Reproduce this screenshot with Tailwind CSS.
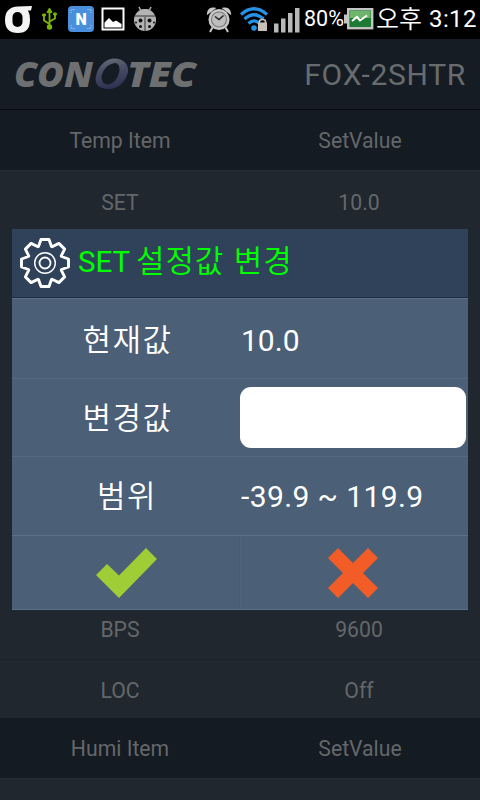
<!DOCTYPE html>
<html lang="ko">
<head>
    <meta charset="UTF-8" />
    <title>FOX-2SHTR</title>
    <script src="https://cdn.jsdelivr.net/npm/@tailwindcss/browser@4"></script>
</head>
<body class="w-[480px] h-[800px] overflow-hidden bg-[#20272f] font-['Roboto','Noto_Sans_CJK_KR',sans-serif]">

<div class="relative w-[480px] h-[800px] overflow-hidden flex flex-col">

    <!-- Status bar -->
    <div class="h-[39px] shrink-0 bg-black flex items-center text-white">
        <svg class="shrink-0" width="304" height="39" viewBox="0 0 304 39">
            <path d="M32 6 L31 10.500 H28 Q30 14 30 20 Q30 33 18 33 Q5 33 5 20 Q5 7 18 6.500 Z" fill="#f4f4f4" />
            <rect x="12.500" y="12" width="10" height="15" rx="5" fill="#000" />

            <g stroke="#7ab800" fill="none" stroke-width="1.800">
                <path d="M49.500 11 V27 M49.500 24 L44 20.500 V16 M49.500 21.500 L55 18.500 V15" />
                <path d="M49.500 8 l2.500 4.500 h-5z M42.700 14 h2.600 v2 h-2.600z M53.700 13 h2.600 v2 h-2.600z" fill="#7ab800" stroke-width="1" />
                <circle cx="49.500" cy="27" r="1.800" fill="#7ab800" />
            </g>

            <rect x="68" y="6" width="26" height="26" rx="4" fill="#4a8fdc" />
            <path d="M71 13 V9.500 H74.500 M87.500 9.500 H91 V13 M71 25 V28.500 H74.500 M87.500 28.500 H91 V25" fill="none" stroke="#a9cdf4" stroke-width="1" stroke-dasharray="1 1" />
            <text x="81" y="25" text-anchor="middle" font-family="Roboto, sans-serif" font-weight="900" font-size="16" fill="#fff">N</text>

            <rect x="102.500" y="8.500" width="21" height="21" fill="#000" stroke="#fff" stroke-width="2" />
            <path d="M104.500 27.500 V22.500 L109 18 L113 22 L116 20.500 L121.500 24 V27.500Z" fill="#fff" />

            <g fill="#b4b4b4">
                <path d="M138 16 Q138 9 145 9 Q152 9 152 16Z" />
                <circle cx="145" cy="20" r="11" />
                <path d="M141 11 L139 7 M149 11 L151 7" stroke="#b4b4b4" stroke-width="1.500" />
            </g>
            <path d="M135 16 H155 M145 17 V31" stroke="#333" stroke-width="1" />
            <g fill="#111">
                <circle cx="140.500" cy="20.500" r="2" /><circle cx="149.500" cy="20.500" r="2" />
                <circle cx="140.500" cy="26.500" r="1.500" /><circle cx="149.500" cy="26.500" r="1.500" />
                <circle cx="136" cy="22.500" r="1" /><circle cx="154" cy="22.500" r="1" />
            </g>

            <path d="M208 13 A5 5 0 0 1 214 8.500 Z M230 13 A5 5 0 0 0 224 8.500Z" fill="#c8c8c8" stroke="#c8c8c8" stroke-width="2" />
            <circle cx="219" cy="19.500" r="9.300" fill="#777" stroke="#c8c8c8" stroke-width="2.500" />
            <circle cx="219" cy="19.500" r="7" fill="#bdbdbd" />
            <path d="M215 16.500 L219 19.500 L223.500 15.500" fill="none" stroke="#222" stroke-width="1.500" />
            <path d="M212.500 27.500 L210 32 M225.500 27.500 L228 32" stroke="#c8c8c8" stroke-width="2" />

            <g fill="none" stroke="#2592e8" stroke-width="3.200">
                <path d="M241 14.500 Q254 3 267 14.500" />
                <path d="M244.500 19 Q254 10.500 263.500 19" />
                <path d="M248.500 23.500 Q254 18.500 259 23" />
            </g>
            <circle cx="254" cy="28" r="2.800" fill="#2592e8" />
            <path d="M259.500 23 V21.500 Q259.500 19.500 262.500 19.500 Q265.500 19.500 265.500 21.500 V23" fill="none" stroke="#d0c9c0" stroke-width="1.600" />
            <rect x="258" y="22.500" width="9" height="8.500" fill="#c9c1b8" />

            <path d="M274 23.500 h4.500 V32.500 h-4.500z M281 18.500 h4.500 V32.500 h-4.500z M288 13 h4.500 V32.500 h-4.500z M295 8 h4.500 V32.500 h-4.500z" fill="#b9b9b9" />
        </svg>
        <span class="w-[40px] shrink-0 text-[21.500px] whitespace-nowrap">80%</span>
        <svg class="shrink-0" width="32" height="39" viewBox="344 0 32 39">
            <rect x="344" y="14.500" width="3" height="9" fill="#c4c4c4" />
            <rect x="348.200" y="9.200" width="24" height="19" fill="#1f7a35" stroke="#c4c4c4" stroke-width="2.400" />
            <rect x="350" y="11" width="20.500" height="7" fill="#6fb46b" />
            <path d="M352 21 L357 17 L360 20.500 L367 15.500" fill="none" stroke="#fff" stroke-width="2" />
        </svg>
        <span class="w-[53px] shrink-0 pb-[5px] text-[25px] leading-[34px] font-[350] whitespace-nowrap font-['Noto_Sans_CJK_KR',sans-serif]">오후</span>
        <span class="pb-[2px] text-[24px] tracking-[0.400px] whitespace-nowrap">3:12</span>
    </div>

    <!-- Page under the dialog -->
    <div class="h-[71px] shrink-0 bg-[#151c23] border-b border-[#070c12] flex items-center justify-between pl-[6px] pr-[14px]">
        <svg width="200" height="60" viewBox="6 44 200 60">
            <defs>
                <linearGradient id="ring" x1="0.200" y1="0" x2="0.400" y2="1">
                    <stop offset="0" stop-color="#6a6f76" />
                    <stop offset="0.350" stop-color="#4b5067" />
                    <stop offset="1" stop-color="#2c3152" />
                </linearGradient>
            </defs>
            <g fill="#6e6f70" font-family="Open Sans, sans-serif" font-weight="800" font-style="italic" font-size="35">
                <text x="14" y="87" textLength="79" lengthAdjust="spacingAndGlyphs">CON</text>
                <text x="127" y="87" textLength="69" lengthAdjust="spacingAndGlyphs">TEC</text>
            </g>
            <path fill-rule="evenodd" fill="url(#ring)" d="M113 58.500 C123 58 129 64 128 72 C126 82 118 89 109 89 C99 89 94 84 96 76 C98 67 104 60 113 58.500Z M115 63 C107 64 102 71 101.500 77 C101.500 82 104 84.500 108 84.500 C114 84 119 77 119.500 70 C119.500 66 118 63 115 63Z" />
        </svg>
        <span class="text-[30px] tracking-[0.700px] text-[#696c6f] whitespace-nowrap">FOX-2SHTR</span>
    </div>
    <div class="h-[60px] shrink-0 bg-[#141b23] pt-px grid grid-cols-2 items-center text-center text-[21.200px] text-[#64676a]">
        <span>Temp Item</span><span>SetValue</span>
    </div>
    <div class="h-[61px] shrink-0 border-t border-[#262d36] pt-[4px] grid grid-cols-2 items-center text-center text-[21.200px] text-[#64676a]">
        <span>SET</span><span class="pr-[2px]">10.0</span>
    </div>
    <div class="h-[368px] shrink-0"></div>
    <div class="h-[61px] shrink-0 border-b border-[#1c232b] pt-px grid grid-cols-2 items-center text-center text-[21.200px] text-[#64676a]">
        <span>BPS</span><span class="pr-[2px]">9600</span>
    </div>
    <div class="h-[58px] shrink-0 pt-[3px] grid grid-cols-2 items-center text-center text-[21.200px] text-[#64676a]">
        <span>LOC</span><span class="pr-[2px]">Off</span>
    </div>
    <div class="h-[60px] shrink-0 bg-[#141b23] pt-px grid grid-cols-2 items-center text-center text-[21.200px] text-[#64676a]">
        <span>Humi Item</span><span>SetValue</span>
    </div>
    <div class="h-[22px] shrink-0 border-t border-[#262d36]"></div>

    <!-- Dialog -->
    <div class="absolute left-[12px] top-[229px] w-[456px] h-[381px] bg-[#4b5f76] text-white text-[30px] flex flex-col">
        <div class="h-[69px] shrink-0 bg-[#2f4259] border-b border-[#1b2b42] flex items-center pl-[7px]">
            <svg class="shrink-0" width="52" height="52" viewBox="-26 -26 52 52" fill="none" stroke="#fff" stroke-linejoin="round">
                <path stroke-width="2.900" d="M-6.500 -16.500 L-4 -23.500 H4 L6.500 -16.500 L7.070 -16.260 L13.900 -19.600 L19.600 -13.900 L16.260 -7.070 L16.500 -6.500 L23.500 -4 V4 L16.500 6.500 L16.260 7.070 L19.600 13.900 L13.900 19.600 L7.070 16.260 L6.500 16.500 L4 23.500 H-4 L-6.500 16.500 L-7.070 16.260 L-13.900 19.600 L-19.600 13.900 L-16.260 7.070 L-16.500 6.500 L-23.500 4 V-4 L-16.500 -6.500 L-16.260 -7.070 L-19.600 -13.900 L-13.900 -19.600 L-7.070 -16.260Z" />
                <circle r="10.300" stroke-width="1.400" />
                <circle r="5.500" stroke-width="1.800" />
            </svg>
            <div class="ml-[7px] pb-[5px] flex items-baseline text-[#00ff00] whitespace-nowrap">
                <span class="w-[58px] text-[29.500px]">SET</span>
                <span class="text-[31px] leading-[44px] tracking-[0.900px] font-[350] font-['Noto_Sans_CJK_KR',sans-serif]">설정값 변경</span>
            </div>
        </div>
        <div class="h-[80px] shrink-0 border-t border-[#5c7087] grid grid-cols-2 items-center">
            <span class="pl-[3px] text-center text-[31px] tracking-[1.500px] font-['Noto_Sans_CJK_KR',sans-serif] font-[350]">현재값</span>
            <span class="pt-[3px] pl-px">10.0</span>
        </div>
        <div class="h-[78px] shrink-0 border-t border-[#55697f] grid grid-cols-2 items-center">
            <span class="pl-[3px] pb-[2px] text-center text-[31px] tracking-[1.500px] font-['Noto_Sans_CJK_KR',sans-serif] font-[350]">변경값</span>
            <input type="text" class="w-[226px] h-[61px] bg-white rounded-[11px] text-black px-3" />
        </div>
        <div class="h-[79px] shrink-0 border-t border-[#55697f] grid grid-cols-2 items-center">
            <span class="pl-[2px] pb-[3px] text-center text-[31px] tracking-[1.500px] font-['Noto_Sans_CJK_KR',sans-serif] font-[350]">범위</span>
            <span class="pl-px tracking-[0.400px] whitespace-nowrap">-39.9 ~ 119.9</span>
        </div>
        <div class="h-[75px] shrink-0 border-y border-[#5c7087] grid grid-cols-2">
            <button class="flex items-center justify-center pl-[2px] border-r border-[#475b72]">
                <svg width="61" height="50" viewBox="96 548 61 50">
                    <path d="M96 575 L107 564 L119 575.500 L146 548 L157 559 L119 598Z" fill="#9fcd36" />
                </svg>
            </button>
            <button class="flex items-center justify-center pr-[4px] border-l border-[#50647b]">
                <svg width="50" height="50" viewBox="328 548 50 50">
                    <path d="M338 548 L353 563 L368 548 L378 558 L363 573 L378 588 L368 598 L353 583 L338 598 L328 588 L343 573 L328 558Z" fill="#f25c27" />
                </svg>
            </button>
        </div>
    </div>
</div>

</body>
</html>
